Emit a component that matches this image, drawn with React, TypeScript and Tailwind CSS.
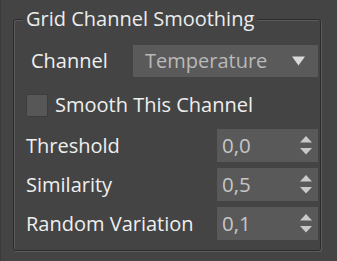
export default function App() {
  const rows = [
    { label: "Threshold", value: "0,0" },
    { label: "Similarity", value: "0,5" },
    { label: "Random Variation", value: "0,1" },
  ]

  return (
    <div
      className="w-[337px] h-[261px] overflow-hidden bg-[#444444] border-l border-[#3b3b3b] pt-[19px] pl-[12px]"
      style={{ fontFamily: '"Open Sans", "Noto Sans", sans-serif' }}
    >
      {/* group box */}
      <div className="relative w-[308px] h-[232px] rounded-[3px] border border-[#2d2d2d] shadow-[1px_1px_0_#5a5a5a,inset_1px_1px_0_#5a5a5a]">
        <span className="absolute left-[9px] top-[-14px] bg-[#444444] px-[3px] text-[20px] leading-[26px] text-[#ececec]">
          Grid Channel Smoothing
        </span>

        <div className="flex flex-col pt-[25px]">
          {/* channel dropdown */}
          <div className="flex items-center h-[32px]">
            <span className="w-[119px] pl-[17px] text-[20px] text-[#efefef]">Channel</span>
            <div className="flex items-center justify-between w-[185px] h-[32px] bg-[#5a5a5a] pl-[12px] pr-[13px]">
              <span className="text-[20px] text-[#b9b9b9]">Temperature</span>
              <svg width="13" height="10" viewBox="0 0 13 10">
                <path d="M0 0.5 H13 L6.5 9.5 Z" fill="#d9d9d9" />
              </svg>
            </div>
          </div>

          {/* checkbox */}
          <div className="flex items-center gap-[7px] h-[24px] mt-[16px] pl-[12px]">
            <div className="w-[22px] h-[23px] bg-[#575757] border border-[#3d3d3d]" />
            <span className="text-[20px] text-[#efefef]">Smooth This Channel</span>
          </div>

          {/* spinners */}
          <div className="flex flex-col gap-[6px] mt-[12px]">
            {rows.map((r) => (
              <div key={r.label} className="flex items-center justify-between h-[33px] pl-[12px] pr-[2px]">
                <span className="text-[20px] text-[#efefef]">{r.label}</span>
                <div className="flex items-center justify-between w-[101px] h-[33px] bg-[#595959] pl-[5px] pr-[6px]">
                  <span className="text-[20.5px] text-[#c6c6c6]">{r.value}</span>
                  <svg width="12" height="19" viewBox="0 0 12 19">
                    <path d="M6 0 L12 6.5 H0 Z" fill="#c9c9c9" />
                    <path d="M0 12 H12 L6 18.5 Z" fill="#c9c9c9" />
                  </svg>
                </div>
              </div>
            ))}
          </div>
        </div>
      </div>
    </div>
  )
}
